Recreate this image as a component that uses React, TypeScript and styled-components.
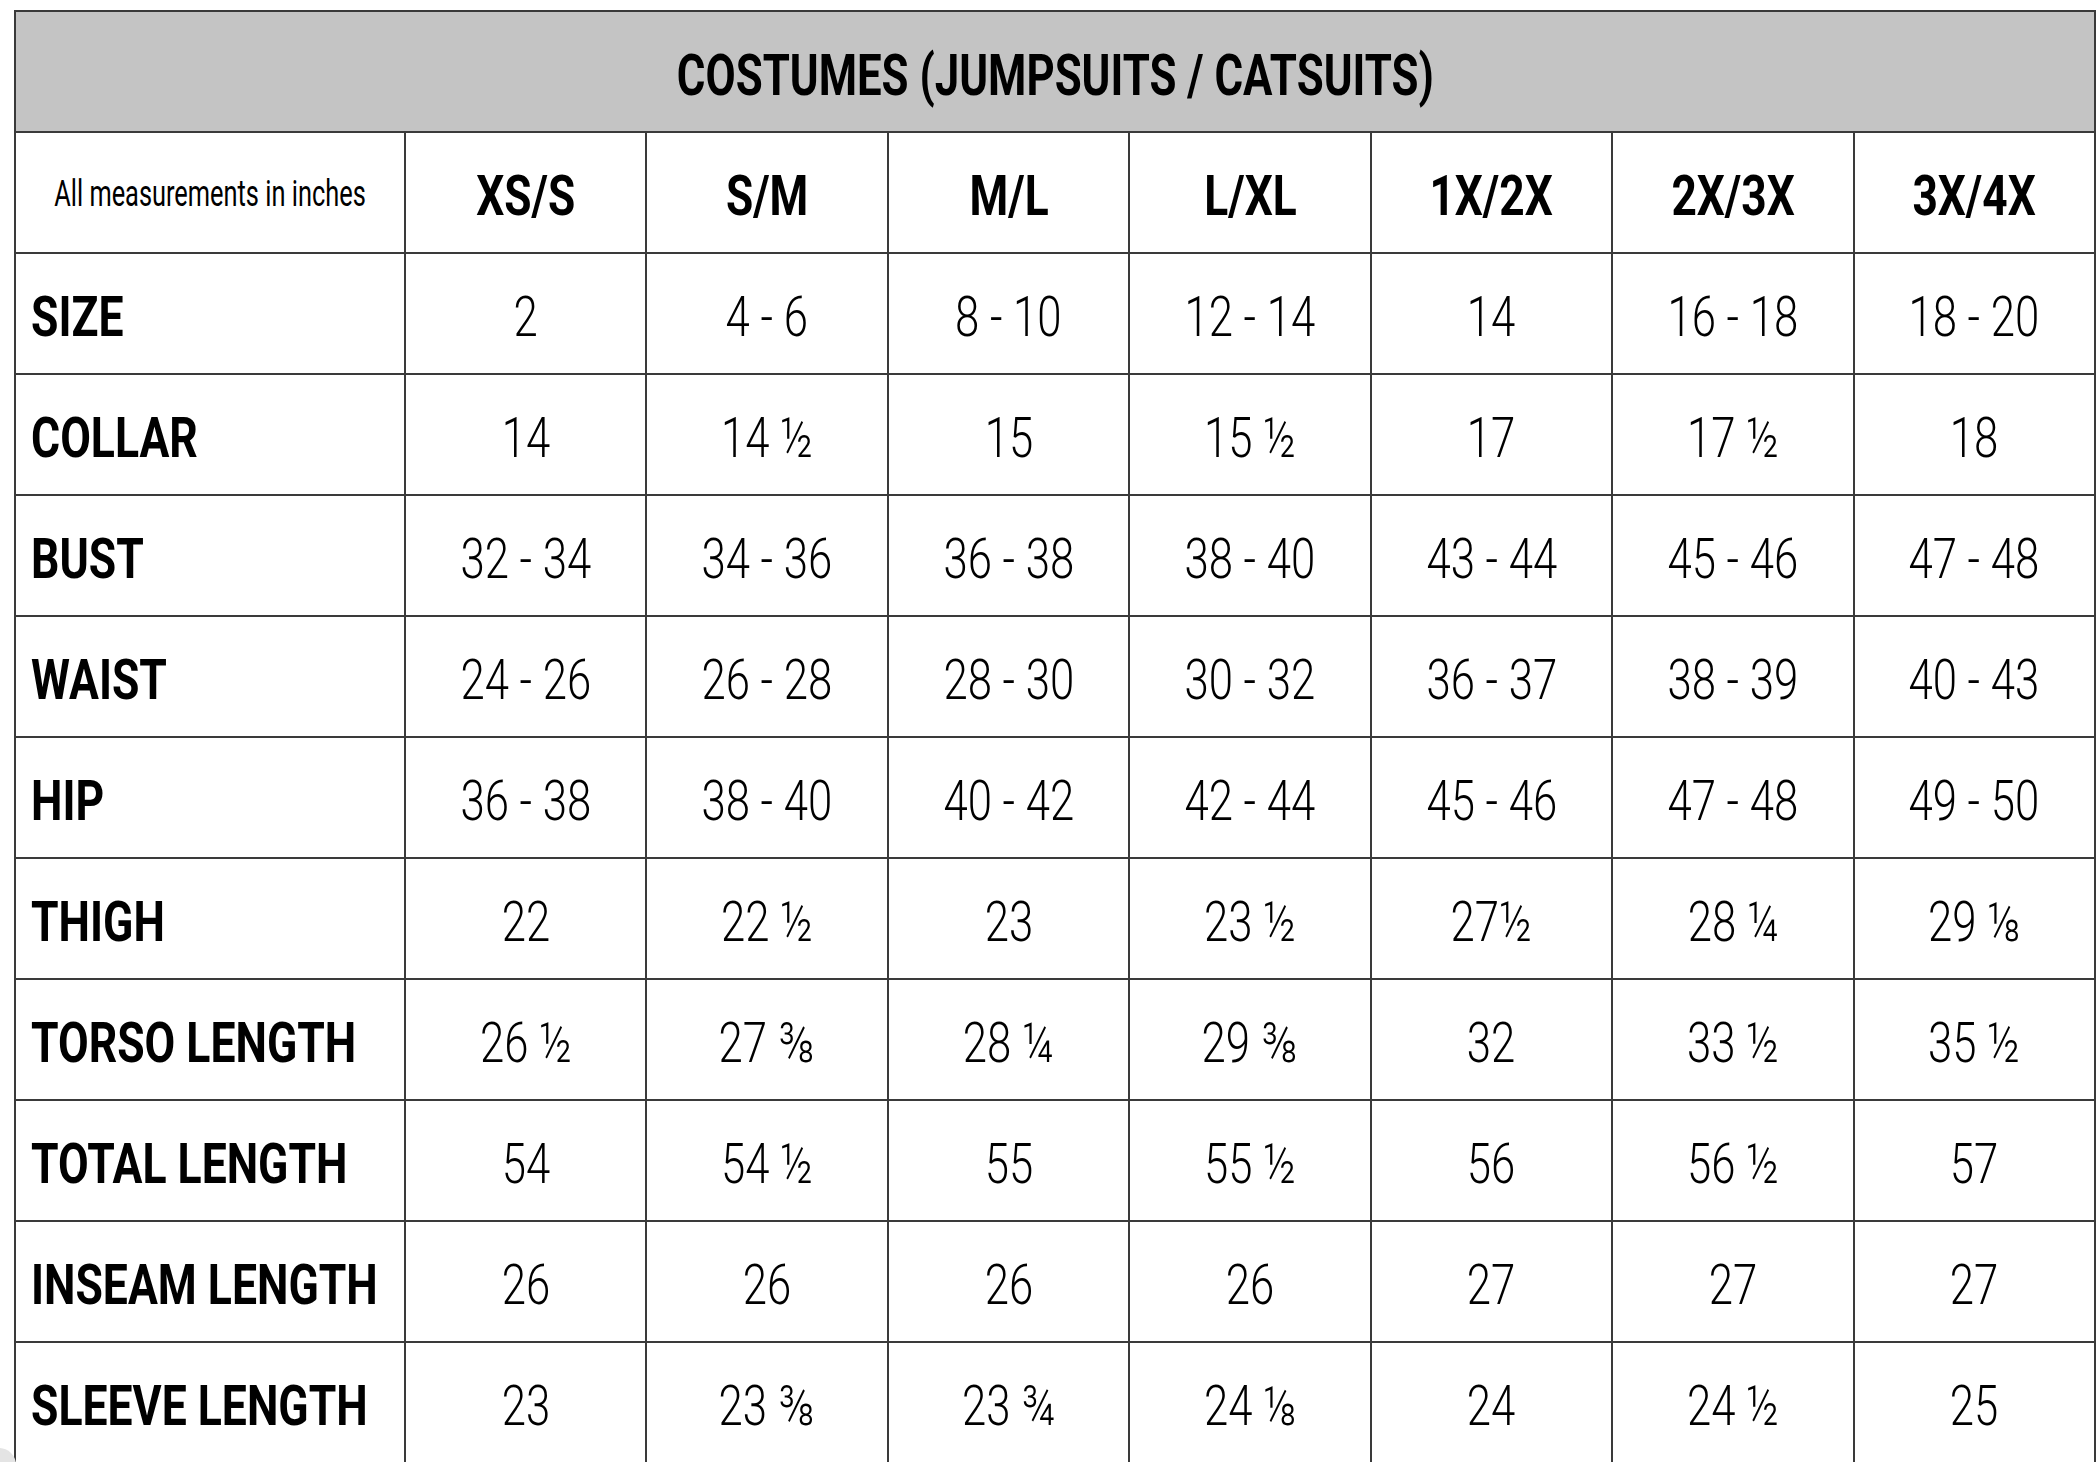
import React from 'react';
import styled, { createGlobalStyle } from 'styled-components';

const GlobalStyle = createGlobalStyle`
  html,
  body {
    margin: 0;
    padding: 0;
    background: #ffffff;
  }
  body {
    font-family: Roboto, 'Liberation Sans', sans-serif;
    color: #000000;
    overflow: hidden;
  }
`;

const sizes = ['XS/S', 'S/M', 'M/L', 'L/XL', '1X/2X', '2X/3X', '3X/4X'];

const rows: { label: string; values: string[] }[] = [
  { label: 'SIZE', values: ['2', '4 - 6', '8 - 10', '12 - 14', '14', '16 - 18', '18 - 20'] },
  { label: 'COLLAR', values: ['14', '14 ½', '15', '15 ½', '17', '17 ½', '18'] },
  { label: 'BUST', values: ['32 - 34', '34 - 36', '36 - 38', '38 - 40', '43 - 44', '45 - 46', '47 - 48'] },
  { label: 'WAIST', values: ['24 - 26', '26 - 28', '28 - 30', '30 - 32', '36 - 37', '38 - 39', '40 - 43'] },
  { label: 'HIP', values: ['36 - 38', '38 - 40', '40 - 42', '42 - 44', '45 - 46', '47 - 48', '49 - 50'] },
  { label: 'THIGH', values: ['22', '22 ½', '23', '23 ½', '27½', '28 ¼', '29 ⅛'] },
  { label: 'TORSO LENGTH', values: ['26 ½', '27 ⅜', '28 ¼', '29 ⅜', '32', '33 ½', '35 ½'] },
  { label: 'TOTAL LENGTH', values: ['54', '54 ½', '55', '55 ½', '56', '56 ½', '57'] },
  { label: 'INSEAM LENGTH', values: ['26', '26', '26', '26', '27', '27', '27'] },
  { label: 'SLEEVE LENGTH', values: ['23', '23 ⅜', '23 ¾', '24 ⅛', '24', '24 ½', '25'] },
];

const Page = styled.div`
  position: relative;
  width: 2096px;
  height: 1462px;
  overflow: hidden;
  box-sizing: border-box;
  padding: 10px 0 0 14px;
  background: #ffffff;
`;

const Chart = styled.div`
  display: grid;
  width: 2082px;
  grid-template-columns: 388px repeat(7, 1fr);
  grid-auto-rows: 119px;
  gap: 2px;
  padding: 2px;
  box-sizing: border-box;
  background: #3a3a3a;
`;

const TitleBar = styled.div`
  grid-column: 1 / -1;
  display: flex;
  align-items: center;
  justify-content: center;
  background: #c4c4c4;
`;

const Cell = styled.div<{ $label?: boolean }>`
  display: flex;
  align-items: center;
  justify-content: ${(p) => (p.$label ? 'flex-start' : 'center')};
  padding-left: ${(p) => (p.$label ? '15px' : '0')};
  background: #ffffff;
  overflow: hidden;
`;

// condensed face: no narrow family is installed, so squeeze Roboto
const Condensed = styled.span`
  display: inline-block;
  white-space: nowrap;
  line-height: 1;
  margin-top: 6px;
  transform-origin: center;
`;

const Title = styled(Condensed)`
  font-size: 58px;
  font-weight: 700;
  transform: scaleX(0.755);
`;

const Note = styled(Condensed)`
  font-size: 36px;
  font-weight: 400;
  margin-top: 2px;
  transform: scaleX(0.705);
`;

const SizeHead = styled(Condensed)`
  font-size: 56px;
  font-weight: 700;
  transform: scaleX(0.79);
`;

const RowLabel = styled(Condensed)`
  font-size: 56px;
  font-weight: 700;
  transform: scaleX(0.795);
  transform-origin: left center;
`;

const Value = styled(Condensed)`
  font-size: 56px;
  font-weight: 300;
  transform: scaleX(0.78);
`;

const Corner = styled.div`
  position: absolute;
  left: -18px;
  bottom: -20px;
  width: 34px;
  height: 34px;
  border-radius: 50%;
  background: #e4e4e4;
`;

export default function App() {
  return (
    <Page>
      <GlobalStyle />
      <Chart>
        <TitleBar>
          <Title>COSTUMES (JUMPSUITS / CATSUITS)</Title>
        </TitleBar>
        <Cell>
          <Note>All measurements in inches</Note>
        </Cell>
        {sizes.map((s) => (
          <Cell key={s}>
            <SizeHead>{s}</SizeHead>
          </Cell>
        ))}
        {rows.map((r) => (
          <React.Fragment key={r.label}>
            <Cell $label>
              <RowLabel>{r.label}</RowLabel>
            </Cell>
            {r.values.map((v, i) => (
              <Cell key={i}>
                <Value>{v}</Value>
              </Cell>
            ))}
          </React.Fragment>
        ))}
      </Chart>
      <Corner />
    </Page>
  );
}
